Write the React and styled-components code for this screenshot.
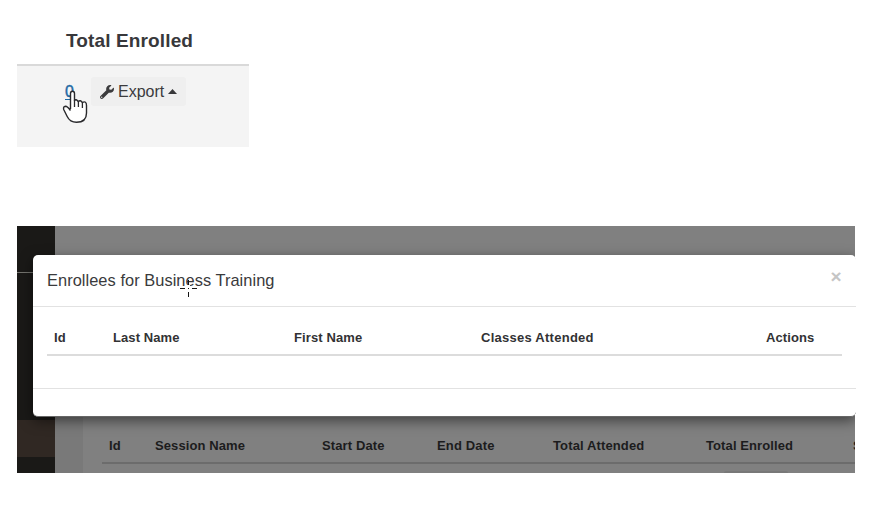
import React from "react";
import styled, { createGlobalStyle } from "styled-components";

const GlobalStyle = createGlobalStyle`
  body { margin: 0; background: #fff; font-family: "Liberation Sans", Arial, sans-serif; color: #333; }
  * { box-sizing: border-box; }
`;

const Page = styled.main`
  width: 896px;
  height: 520px;
  padding: 15px 0 0 17px;
  overflow: hidden;
  background: #fff;
`;

const EnrolledCard = styled.section`
  width: 232px;
  height: 132px;
  display: flex;
  flex-direction: column;
`;

const EnrolledTitle = styled.h2`
  margin: 0;
  height: 51px;
  padding: 14px 0 0 49px;
  border-bottom: 2px solid #d9d9d9;
  font-size: 19px;
  line-height: 24px;
  letter-spacing: 0.13px;
  white-space: nowrap;
  color: #38383b;
`;

const EnrolledRow = styled.div`
  flex: 1;
  display: flex;
  align-items: flex-start;
  padding: 11px 0 0 48px;
  background: #f4f4f4;
  font-size: 16px;
`;

const CountLink = styled.a`
  position: relative;
  width: 26px;
  line-height: 29px;
  color: #1e6aa5;
  -webkit-text-stroke: 0.4px #1e6aa5;
  text-decoration: underline;
  text-underline-offset: 2px;
`;

const HandCursor = styled.svg`
  position: absolute;
  left: -3px;
  top: 13px;
`;

const ExportButton = styled.button`
  width: 95px;
  height: 29px;
  margin: 0;
  padding: 0 0 0 9px;
  border: 0;
  border-radius: 3px;
  display: flex;
  align-items: center;
  background: #efefef;
  color: #3b3b3d;
  font: 16px "Liberation Sans", Arial, sans-serif;
`;

const ExportLabel = styled.span`
  margin: 0 4px 0 4px;
`;

const Screen = styled.section`
  position: relative;
  width: 838px;
  height: 247px;
  margin-top: 79px;
  display: flex;
  background: #808080;
`;

const Sidebar = styled.aside`
  width: 38px;
  display: flex;
  flex-direction: column;
  background: #1a1917;
`;

const SidebarTop = styled.div`
  height: 47px;
  border-bottom: 1px solid #73736e;
`;

const SidebarActive = styled.div`
  height: 37px;
  margin-top: 147px;
  background: #302823;
`;

const Gutter = styled.div`
  width: 28px;
  margin-top: 175px;
  background: #797979;
`;

const Sessions = styled.div`
  flex: 1;
  min-width: 0;
  padding: 209px 0 0 19px;
  overflow: hidden;
`;

const HeaderRow = styled.div`
  display: grid;
  grid-template-columns: ${(p) => p.$columns};
  height: ${(p) => p.$height}px;
  padding-left: 7px;
  border-bottom: 2px solid ${(p) => p.$line};
  color: ${(p) => p.$color};
  font-size: 13px;
  font-weight: bold;
  line-height: 22px;
  white-space: nowrap;
`;

const HeaderCell = styled.span`
  letter-spacing: ${(p) => p.$spacing || 0}px;
`;

const SessionButton = styled.div`
  width: 64px;
  height: 2px;
  margin: 7px 0 0 622px;
  border-radius: 2px 2px 0 0;
  background: #787878;
`;

const ModalClip = styled.div`
  position: absolute;
  inset: 0 -1px 0 0;
  overflow: hidden;
`;

const Modal = styled.div`
  position: absolute;
  left: 16px;
  top: 29px;
  width: 823px;
  height: 162px;
  border-radius: 5px;
  border-bottom: 1px solid #666;
  background: #fff;
  box-shadow: 0 4px 13px rgba(0, 0, 0, 0.5);
`;

const EdgeCover = styled.div`
  position: absolute;
  right: 0;
  top: ${(p) => p.$top}px;
  width: 1px;
  height: ${(p) => p.$height}px;
  background: #fff;
`;

const ModalHeader = styled.header`
  position: relative;
  height: 52px;
  padding: 13px 14px 0 14px;
  display: flex;
  justify-content: space-between;
  border-bottom: 1px solid #e2e2e2;
`;

const ModalTitle = styled.h3`
  margin: 0;
  font-size: 16.4px;
  font-weight: normal;
  line-height: 24px;
  letter-spacing: 0.05px;
  color: #3a3a3c;
  white-space: nowrap;
`;

const CloseButton = styled.button`
  width: 12px;
  height: 16px;
  padding: 0;
  border: 0;
  background: transparent;
  color: #c5c5c5;
  font: bold 19px/18px "Liberation Sans", Arial, sans-serif;
`;

const Crosshair = styled.svg`
  position: absolute;
  left: 147px;
  top: 25px;
`;

const ModalBody = styled.div`
  height: 82px;
  padding: 20px 14px 0;
  border-bottom: 1px solid #e2e2e2;
`;

const enrolleeColumns = [
  { label: "Id", spacing: 0.1 },
  { label: "Last Name", spacing: 0.08 },
  { label: "First Name", spacing: 0.12 },
  { label: "Classes Attended", spacing: 0.26 },
  { label: "Actions", spacing: 0.1 },
];

const sessionColumns = [
  { label: "Id", spacing: 0.1 },
  { label: "Session Name", spacing: 0.1 },
  { label: "Start Date", spacing: 0.12 },
  { label: "End Date", spacing: 0.15 },
  { label: "Total Attended", spacing: 0.13 },
  { label: "Total Enrolled", spacing: 0.1 },
  { label: "S" },
];

function Columns({ items }) {
  return items.map((item) => (
    <HeaderCell key={item.label} $spacing={item.spacing}>{item.label}</HeaderCell>
  ));
}

function Wrench() {
  return (
    <svg width="14" height="14" viewBox="0 0 512 512" fill="#3b3b3d">
      <path d="M507.7 109.1c-2.2-9-13.5-12.1-20.1-5.5l-74.4 74.4-67.9-11.3L334 98.9l74.4-74.4c6.6-6.6 3.4-17.9-5.700-20.2-47.4-11.7-99.6.9-136.6 37.9-39.6 39.6-50.6 97.1-34.1 147.2L18.7 402.8c-25 25-25 65.5 0 90.5s65.5 25 90.500 0l213.2-213.2c50.1 16.7 107.5 5.700 147.4-34.2 37.1-37.1 49.7-89.3 37.9-136.8zM64 472c-13.2 0-24-10.8-24-24s10.7-24 24-24 24 10.7 24 24-10.7 24-24 24z" />
    </svg>
  );
}

export default function App() {
  return (
    <>
      <GlobalStyle />
      <Page>
        <EnrolledCard>
          <EnrolledTitle>Total Enrolled</EnrolledTitle>
          <EnrolledRow>
            <CountLink>
              0
              <HandCursor width="27" height="34" viewBox="0 0 27 34">
                <path
                  d="M8.500 19V3.500Q8.500 1.200 10.500 1.200T12.500 3.500V10.500Q14 8.500 16.300 11.500Q18.500 9.500 20.300 12.500Q24.500 10.500 24.500 15.500V23Q24.500 32.300 14.500 32.300Q8 32.300 5.200 26.500L1.700 19.500Q1 16.500 3.500 16.200Q5.500 16.200 8.500 20.500"
                  fill="#fff" stroke="#29292c" strokeWidth="1.4" strokeLinejoin="round"
                />
                <path d="M12.500 10v7M16.400 11v6M20.400 12v6" fill="none" stroke="#29292c" strokeWidth="1.3" />
              </HandCursor>
            </CountLink>
            <ExportButton>
              <Wrench />
              <ExportLabel>Export</ExportLabel>
              <svg width="9" height="5" viewBox="0 0 9 5"><path d="M0 5L4.500 0L9 5Z" fill="#38383a" /></svg>
            </ExportButton>
          </EnrolledRow>
        </EnrolledCard>

        <Screen>
          <Sidebar>
            <SidebarTop />
            <SidebarActive />
          </Sidebar>
          <Gutter />
          <Sessions>
            <HeaderRow $columns="46px 167px 115px 116px 153px 147px 60px" $height={29} $line="#6c6c6c" $color="#1c1c1d">
              <Columns items={sessionColumns} />
            </HeaderRow>
            <SessionButton />
          </Sessions>
          <ModalClip>
            <Modal>
              <ModalHeader>
                <ModalTitle>Enrollees for Business Training</ModalTitle>
                <CloseButton aria-label="Close">×</CloseButton>
                <Crosshair width="17" height="17" viewBox="0 0 17 17" shapeRendering="crispEdges">
                  <path d="M7 5h3v2H7zM4 7h8v3H4zM7 10h3v2H7z" fill="#fff" />
                  <path d="M0 8h5v1H0zM12 8h5v1h-5zM8 0h1v5H8zM8 8h1v1H8zM8 12h1v5H8z" fill="#151515" />
                </Crosshair>
              </ModalHeader>
              <ModalBody>
                <HeaderRow $columns="59px 181px 187px 285px 75px" $height={29} $line="#dcdcdc" $color="#323234">
                  <Columns items={enrolleeColumns} />
                </HeaderRow>
              </ModalBody>
            </Modal>
            <EdgeCover $top={0} $height={32} />
            <EdgeCover $top={188} $height={59} />
          </ModalClip>
        </Screen>
      </Page>
    </>
  );
}
